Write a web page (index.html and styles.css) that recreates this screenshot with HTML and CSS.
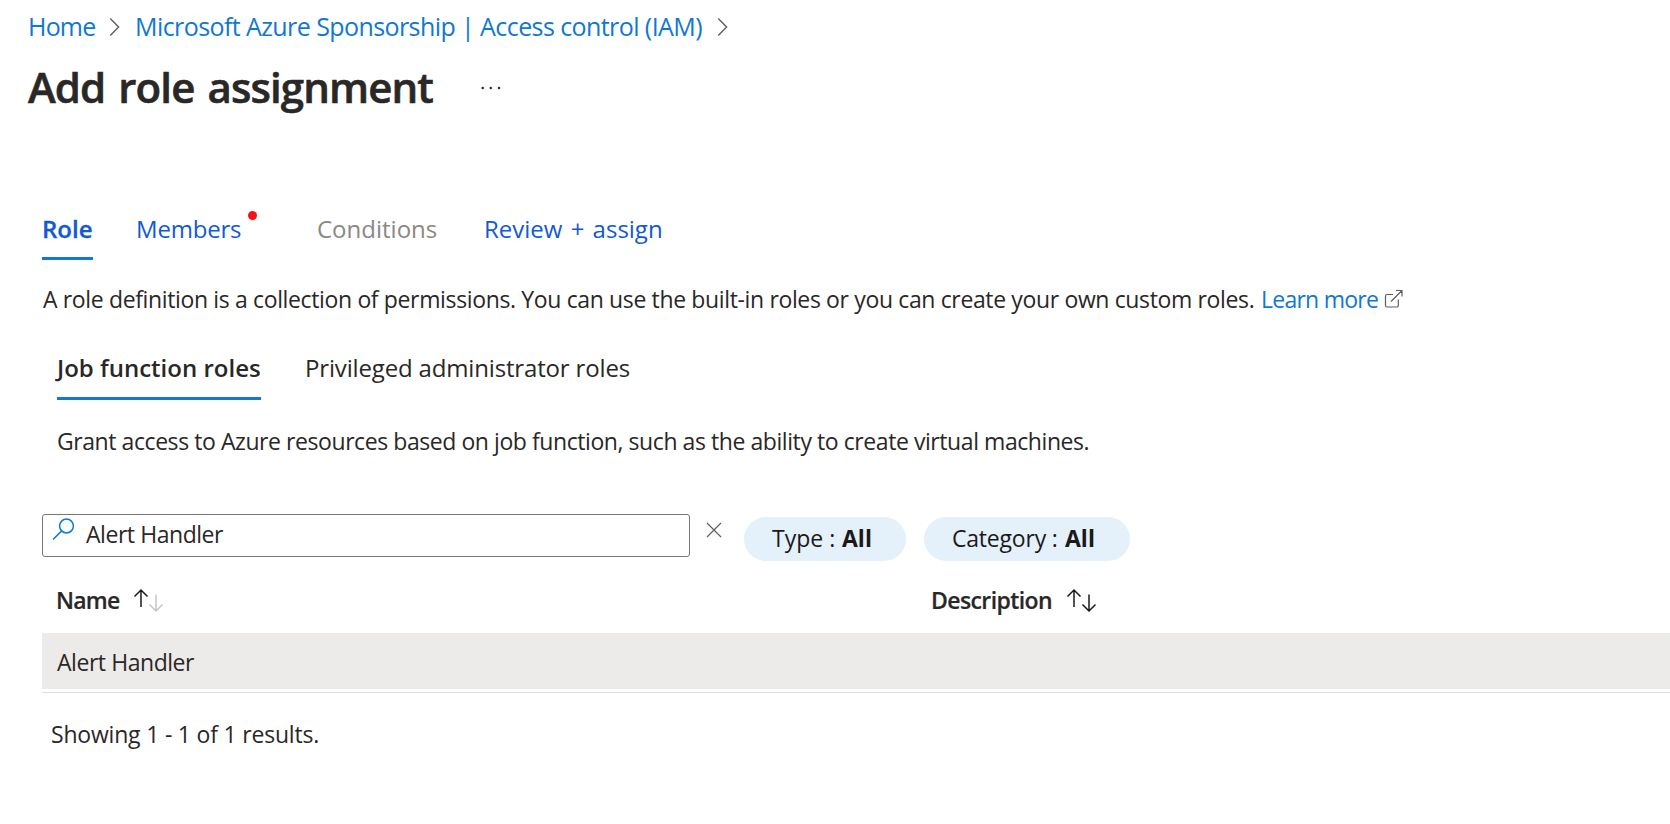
FILE: index.html
```
<!DOCTYPE html>
<html lang="en">
<head>
<meta charset="utf-8">
<title>Add role assignment</title>
<link rel="stylesheet" href="styles.css">
</head>
<body>
<nav class="breadcrumb">
  <a class="crumb crumb-home">Home</a>
  <svg class="chevron" width="12" height="20" viewBox="0 0 12 20"><path d="M1.3 1.5 9.6 10 1.3 18.5"/></svg>
  <a class="crumb crumb-sub">Microsoft Azure Sponsorship | Access control (IAM)</a>
  <svg class="chevron" width="12" height="20" viewBox="0 0 12 20"><path d="M1.3 1.5 9.6 10 1.3 18.5"/></svg>
</nav>
<header class="title-row">
  <h1 class="title">Add role assignment</h1>
  <svg class="more" width="22" height="6" viewBox="0 0 22 6"><circle cx="2.7" cy="3" r="1.3"/><circle cx="10.8" cy="3" r="1.3"/><circle cx="19" cy="3" r="1.3"/></svg>
</header>
<nav class="tabs">
  <a class="tab tab-role active"><span>Role</span></a>
  <a class="tab tab-members"><span>Members</span><i class="dot"></i></a>
  <a class="tab tab-conditions"><span>Conditions</span></a>
  <a class="tab tab-review"><span>Review + assign</span></a>
</nav>
<p class="intro"><span class="intro-text">A role definition is a collection of permissions. You can use the built-in roles or you can create your own custom roles.</span><a class="learn">Learn more</a><svg class="external" width="20" height="20" viewBox="0 0 20 20"><path d="M9 5.500H3a1.500 1.500 0 0 0-1.500 1.500V16.500A1.500 1.500 0 0 0 3 18h9.800a1.500 1.500 0 0 0 1.500-1.500v-6M7 12.500 18 1.500M12 1.500h6v6"/></svg></p>
<nav class="subtabs">
  <a class="subtab subtab-job active"><span>Job function roles</span></a>
  <a class="subtab subtab-priv"><span>Privileged administrator roles</span></a>
</nav>
<p class="grant"><span>Grant access to Azure resources based on job function, such as the ability to create virtual machines.</span></p>
<section class="filters">
  <div class="search">
    <svg class="lens" width="23" height="23" viewBox="0 0 23 23"><circle cx="14.500" cy="8" r="6.900"/><path d="M9.700 12.900 1 21.500"/></svg>
    <span class="query">Alert Handler</span>
  </div>
  <svg class="clear" width="16" height="16" viewBox="0 0 16 16"><path d="M1 1 15 15M15 1 1 15"/></svg>
  <div class="pill pill-type"><span class="pill-name">Type :</span><b>All</b></div>
  <div class="pill pill-category"><span class="pill-name">Category :</span><b>All</b></div>
</section>
<section class="grid">
  <div class="grid-head">
    <div class="col-name"><span>Name</span>
      <svg class="sort" width="30" height="24" viewBox="0 0 30 24"><path d="M8 19V2M1.500 8.500 8 2l6.500 6.500"/><path class="faded" d="M23 6.500v16.500M16.500 16.500l6.500 6.500 6.500-6.500"/></svg>
    </div>
    <div class="col-desc"><span>Description</span>
      <svg class="sort" width="30" height="24" viewBox="0 0 30 24"><path d="M8 19V2M1.500 8.500 8 2l6.500 6.500"/><path d="M23 6.500v16.500M16.500 16.500l6.500 6.500 6.500-6.500"/></svg>
    </div>
  </div>
  <div class="grid-row"><span>Alert Handler</span></div>
</section>
<p class="count"><span>Showing 1 - 1 of 1 results.</span></p>
</body>
</html>
```
FILE: styles.css
```
* { box-sizing: border-box; }
body {
  margin: 0;
  height: 824px;
  overflow: hidden;
  background: #fff;
  color: #292827;
  font: 23px/34px "Open Sans", "Noto Sans", sans-serif;
  letter-spacing: -0.4px;
  white-space: nowrap;
}
svg { display: block; flex: none; fill: none; stroke: #605e5c; stroke-width: 1.4; }
p, h1 { margin: 0; font-weight: 400; }

.breadcrumb { display: flex; align-items: center; height: 54px; padding-left: 28px; font-size: 25px; letter-spacing: -0.58px; color: #0f78d4; }
.crumb { margin-top: -2px; }
.crumb-home { width: 81px; letter-spacing: -0.8px; }
.crumb-sub { width: 582px; margin-left: 14px; }
.breadcrumb .chevron { width: 12px; }

.title-row { display: flex; align-items: center; height: 66px; padding-left: 28px; }
.title { width: 452px; font-size: 42px; line-height: 60px; font-weight: 600; letter-spacing: -0.9px; word-spacing: 3px; -webkit-text-stroke: 0.6px; }
.more { fill: #323130; stroke: none; margin-top: 1px; }

.tabs { display: flex; height: 64px; margin-top: 76px; padding-left: 42px; font-size: 24px; color: #1159d6; }
.tab { position: relative; height: 64px; padding-top: 16px; }
.tab-role { width: 51px; font-weight: 600; letter-spacing: 0; -webkit-text-stroke: 0.3px; }
.tab-members { margin-left: 43px; width: 181px; letter-spacing: -0.2px; }
.tab-conditions { width: 167px; letter-spacing: 0; color: #8a8886; }
.tab-review { letter-spacing: 0; word-spacing: 2px; }
.tabs .active, .subtabs .active { border-bottom: 3px solid #1279d3; }
.dot { position: absolute; left: 112px; top: 15px; width: 9px; height: 9px; border-radius: 50%; background: #fd1014; }

.intro { display: flex; align-items: center; height: 34px; margin-top: 22px; padding-left: 43px; letter-spacing: -0.36px; }
.intro-text { width: 1218px; }
.learn { width: 123px; letter-spacing: -0.75px; color: #0f78d4; }
.external { stroke-width: 1.2; }

.subtabs { display: flex; height: 49px; margin-top: 35px; padding-left: 57px; font-size: 24px; }
.subtab { height: 49px; }
.subtab-job { width: 204px; font-weight: 600; letter-spacing: 0; }
.subtab-priv { margin-left: 44px; letter-spacing: -0.16px; }

.grant { margin-top: 24px; padding-left: 57px; letter-spacing: -0.43px; }

.filters { display: flex; height: 60px; margin-top: 56px; padding-left: 42px; }
.search { display: flex; width: 648px; height: 43px; border: 1px solid #797775; border-radius: 3px; padding-left: 9px; letter-spacing: -0.45px; }
.lens { margin-top: 3px; stroke: #0f78d4; stroke-width: 1.5; }
.query { margin: 2px 0 0 11px; }
.clear { margin: 8px 0 0 16px; stroke-width: 1.2; }
.pill { display: flex; height: 44px; margin-top: 3px; padding: 4px 0 0 28px; border-radius: 22px; background: #e4f1fa; color: #1b1a19; }
.pill b { font-weight: 700; letter-spacing: 0; }
.pill-type { width: 162px; margin-left: 22px; }
.pill-type .pill-name { width: 70px; letter-spacing: 0; }
.pill-category { width: 206px; margin-left: 18px; }
.pill-category .pill-name { width: 113px; letter-spacing: -0.2px; }

.grid { padding-left: 42px; }
.grid-head { display: flex; height: 59px; padding: 9px 0 0 14px; font-weight: 600; letter-spacing: -0.6px; -webkit-text-stroke: 0.2px; }
.grid-head > div { display: flex; align-items: flex-start; }
.col-name { width: 875px; }
.col-name span { width: 77px; letter-spacing: -0.8px; }
.col-desc span { width: 135px; }
.sort { margin-top: 5px; stroke: #1b1a19; stroke-width: 1.5; }
.sort .faded { stroke: #c8c6c4; }
.grid-row { height: 56px; padding: 12px 0 0 15px; background: #edebe9; letter-spacing: -0.45px; }
.grid::after { content: ""; display: block; height: 3px; border-bottom: 1px solid #dedddc; }

.count { margin-top: 24px; padding-left: 51px; letter-spacing: -0.2px; }
```
